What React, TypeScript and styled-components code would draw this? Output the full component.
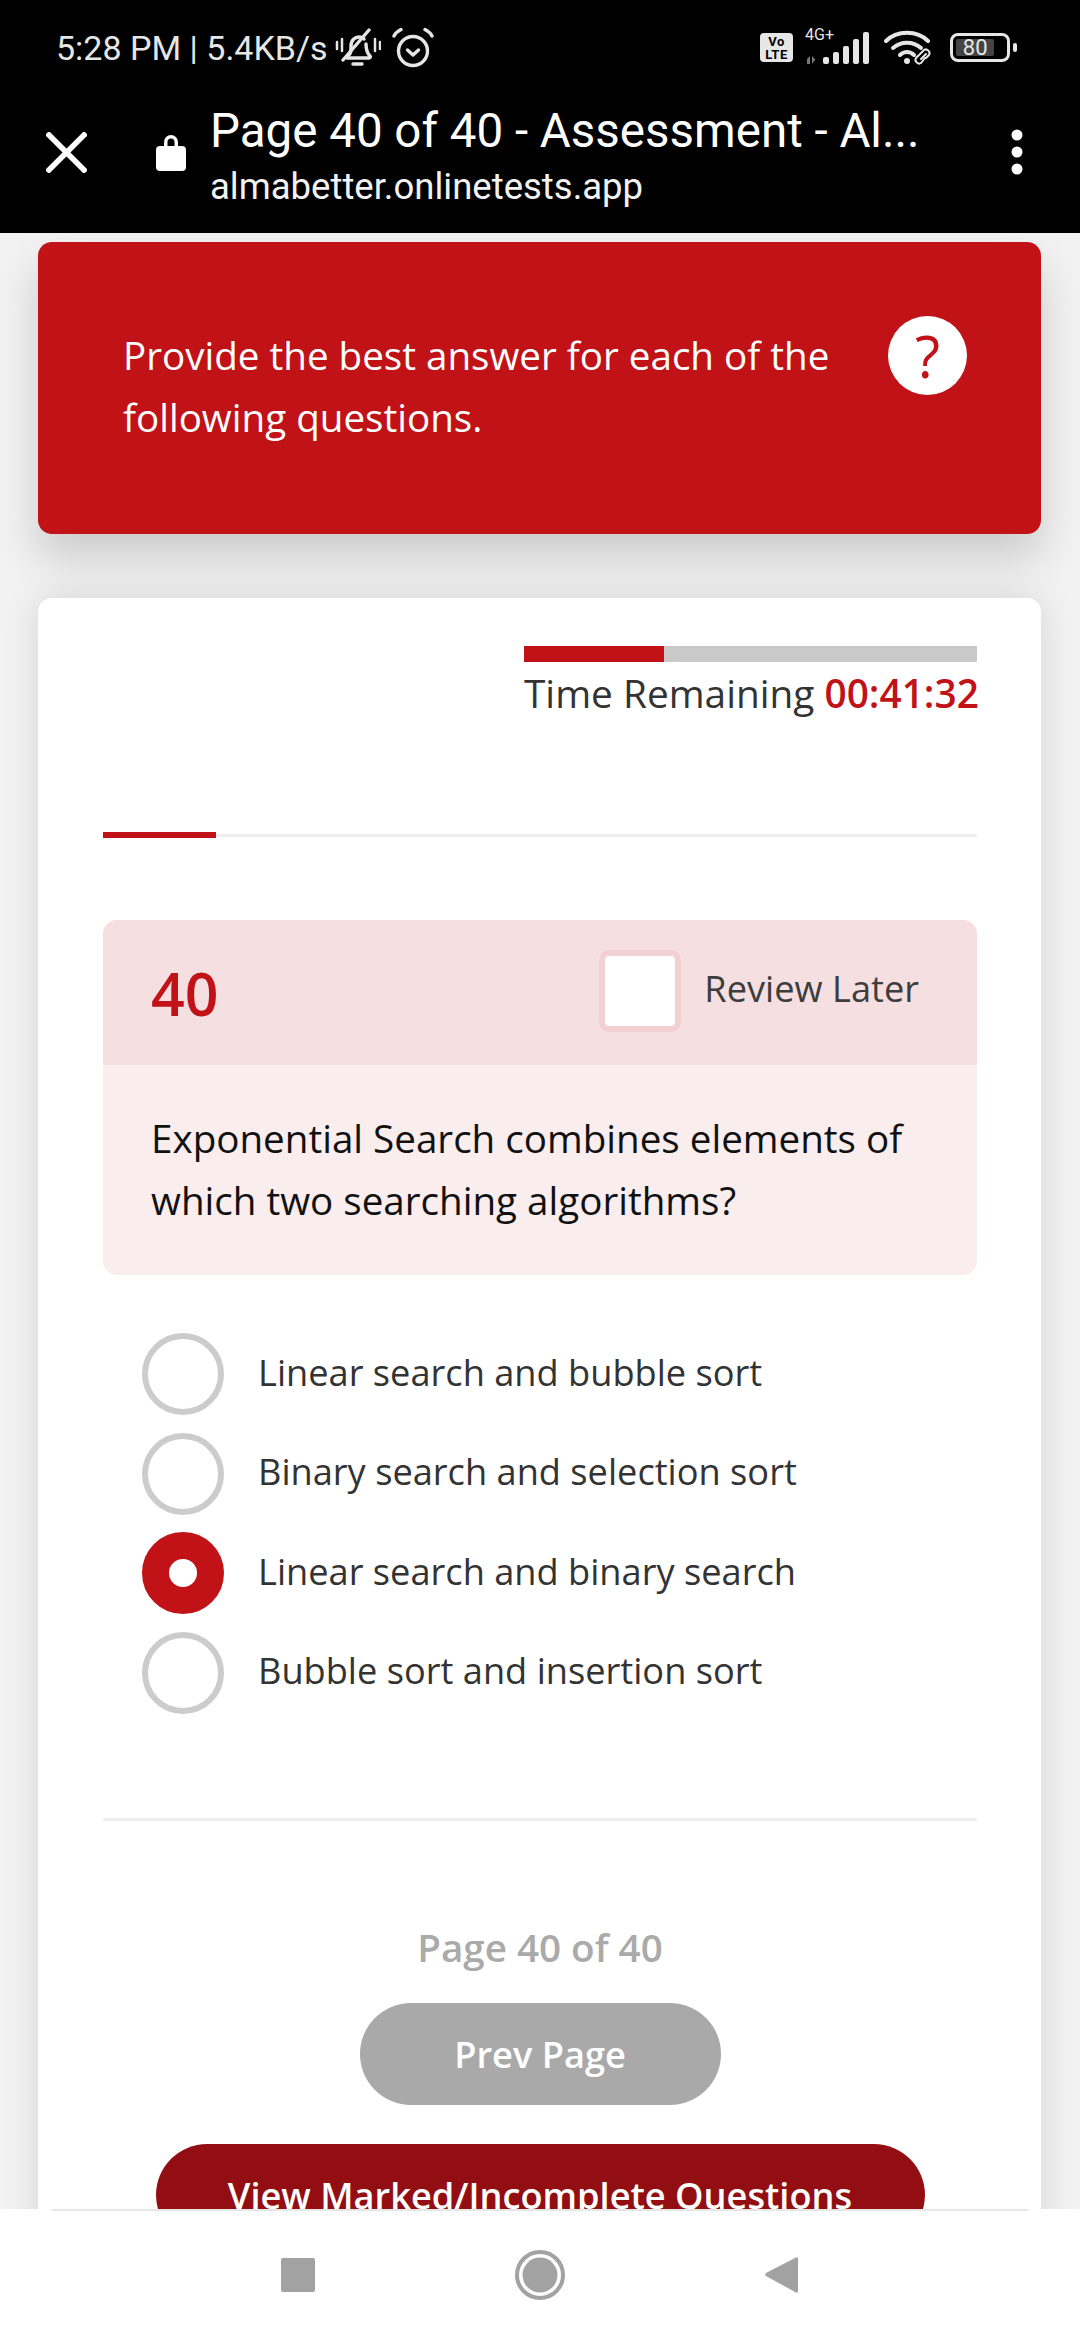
import { createGlobalStyle, styled } from 'styled-components';

const GlobalStyle = createGlobalStyle`
  html, body {
    margin: 0;
    padding: 0;
    background: #f2f2f2;
  }
  * {
    box-sizing: border-box;
  }
`;

const Screen = styled.div`
  width: 1080px;
  height: 2340px;
  display: flex;
  flex-direction: column;
  overflow: hidden;
  font-family: 'Open Sans', 'Liberation Sans', sans-serif;
`;

const Header = styled.header`
  height: 233px;
  flex-shrink: 0;
  background: #000;
  color: #fff;
  font-family: Roboto, 'Liberation Sans', sans-serif;
`;

const StatusBar = styled.div`
  height: 95px;
  padding: 0 63px 0 56px;
  display: flex;
  align-items: center;
  color: #e6e6e6;
`;

const StatusText = styled.span`
  font-size: 34px;
  white-space: nowrap;
  margin-right: 7px;
`;

const AlarmSlot = styled.div`
  margin-left: 11px;
  display: flex;
`;

const StatusIcons = styled.div`
  margin-left: auto;
  display: flex;
  align-items: center;
`;

const VolteBadge = styled.div`
  width: 33px;
  height: 29px;
  border-radius: 4px;
  background: #e6e6e6;
  color: #000;
  font-size: 13px;
  font-weight: 700;
  line-height: 13px;
  letter-spacing: 0.5px;
  text-align: center;
  padding-top: 2px;
  margin-right: 12px;
`;

const SignalWrap = styled.div`
  position: relative;
  width: 65px;
  height: 34px;
  margin-right: 14px;
`;

const NetworkLabel = styled.span`
  position: absolute;
  left: 0;
  top: -4px;
  font-size: 16px;
  line-height: 16px;
`;

const Toolbar = styled.div`
  height: 138px;
  padding: 0 0 24px 46px;
  display: flex;
  align-items: center;
`;

const LockSlot = styled.div`
  margin-left: 68px;
  display: flex;
`;

const TitleBlock = styled.div`
  width: 720px;
  margin-left: 23px;
  margin-top: 8px;
`;

const PageTitle = styled.div`
  font-size: 47.5px;
  line-height: 56px;
  white-space: nowrap;
`;

const PageUrl = styled.div`
  font-size: 36.5px;
  line-height: 44px;
  margin-top: 6px;
  color: #f2f2f2;
`;

const MenuSlot = styled.div`
  margin-left: auto;
  margin-right: 57px;
  display: flex;
`;

const Content = styled.main`
  flex: 1;
  min-height: 0;
  overflow: hidden;
  padding: 9px 39px 0 38px;
  background: #f2f2f2;
`;

const Banner = styled.section`
  height: 292px;
  border-radius: 14px;
  background: #c11217;
  color: #fff;
  padding: 82px 74px 0 85px;
  display: flex;
  justify-content: space-between;
  box-shadow: 0 24px 44px rgba(0, 0, 0, 0.16);
`;

const BannerText = styled.p`
  margin: 0;
  font-size: 38.6px;
  line-height: 62px;
  width: 750px;
`;

const HelpButton = styled.div`
  width: 79px;
  height: 79px;
  border-radius: 50%;
  background: #fff;
  color: #c11217;
  font-size: 58px;
  line-height: 79px;
  text-align: center;
  margin-top: -8px;
`;

const Card = styled.section`
  margin-top: 64px;
  padding: 48px 64px 0 65px;
  height: 1700px;
  border-radius: 14px;
  background: #fff;
  box-shadow: 0 0 36px rgba(0, 0, 0, 0.12);
`;

const TimerBlock = styled.div`
  width: 453px;
  margin-left: auto;
`;

const TimerTrack = styled.div`
  height: 16px;
  background: #c9c9c9;
`;

const TimerFill = styled.div<{ $percent: number }>`
  width: ${(p) => p.$percent}%;
  height: 100%;
  background: #c11217;
`;

const TimerText = styled.div`
  font-size: 38.8px;
  line-height: 52px;
  margin-top: 5px;
  color: #333;
  white-space: nowrap;
`;

const TimerValue = styled.span`
  color: #c11217;
  font-weight: 600;
`;

const ProgressLine = styled.div`
  height: 3px;
  margin-top: 115px;
  background: #eeeeee;
  position: relative;
`;

const ProgressFill = styled.div<{ $percent: number }>`
  position: absolute;
  left: 0;
  top: -2px;
  width: ${(p) => p.$percent}%;
  height: 6px;
  background: #c11217;
`;

const QuestionBox = styled.div`
  margin-top: 83px;
  border-radius: 14px;
  overflow: hidden;
`;

const QuestionHead = styled.div`
  height: 145px;
  background: #f6dfe1;
  padding: 0 58px 0 48px;
  display: flex;
  align-items: center;
  justify-content: space-between;
`;

const QuestionNumber = styled.span`
  font-size: 59px;
  font-weight: 600;
  color: #c11217;
`;

const ReviewWrap = styled.label`
  display: flex;
  align-items: center;
  gap: 23px;
  margin-top: -3px;
`;

const ReviewBox = styled.span`
  width: 82px;
  height: 82px;
  border: 6px solid #f2d0d3;
  border-radius: 10px;
  background: #fff;
`;

const ReviewText = styled.span`
  font-size: 36.2px;
  color: #3d3d3d;
  margin-top: -6px;
`;

const QuestionBody = styled.p`
  margin: 0;
  height: 210px;
  background: #f9edee;
  padding: 42px 48px 0;
  font-size: 38.6px;
  line-height: 62px;
  color: #111;
`;

const Options = styled.div`
  margin-top: 58px;
  padding-left: 39px;
  display: flex;
  flex-direction: column;
  gap: 17.500px;
`;

const Option = styled.div`
  height: 82px;
  display: flex;
  align-items: center;
  gap: 34px;
  font-size: 36.2px;
  color: #333;
`;

const Radio = styled.span<{ $checked?: boolean }>`
  width: 82px;
  height: 82px;
  flex-shrink: 0;
  border-radius: 50%;
  border: ${(p) => (p.$checked ? '27px solid #c11217' : '6px solid #cccccc')};
  background: #fff;
`;

const OptionLabel = styled.span`
  margin-top: -5px;
`;

const BottomLine = styled.div`
  height: 3px;
  margin-top: 104px;
  background: #eeeeee;
`;

const Pager = styled.div`
  margin-top: 100px;
  display: flex;
  flex-direction: column;
  align-items: center;
`;

const PagerText = styled.div`
  font-size: 38.6px;
  line-height: 52px;
  font-weight: 600;
  color: #aaaaaa;
`;

const PillButton = styled.div<{ $dark?: boolean }>`
  width: ${(p) => (p.$dark ? '769px' : '361px')};
  height: 102px;
  margin-top: ${(p) => (p.$dark ? '39px' : '30px')};
  border-radius: 51px;
  background: ${(p) => (p.$dark ? '#920e13' : '#a9a9a9')};
  color: #fff;
  font-size: 36.2px;
  font-weight: 600;
  line-height: 102px;
  text-align: center;
`;

const NavBar = styled.nav`
  height: 131px;
  flex-shrink: 0;
  background: #fff;
  position: relative;
  padding-top: 1px;
  display: grid;
  grid-template-columns: repeat(3, 242px);
  justify-content: center;
  align-items: center;
  justify-items: center;
  &::before {
    content: '';
    position: absolute;
    left: 52px;
    right: 52px;
    top: 0;
    height: 2px;
    background: #e6e6e6;
  }
`;

const NavSlot = styled.div`
  display: flex;
`;

const BellOff = () => (
  <svg width="46" height="40" viewBox="0 0 46 40" fill="none" stroke="#e6e6e6" strokeWidth="3.400" strokeLinecap="round">
    <path d="M14 27c2-2 2-4 2-9 0-6 4-9 8-9 2 0 4 .6 5 2" />
    <path d="M31 16c0 6 1 9 4 12 1 1 0 2-1 2H12" />
    <path d="M8 32 34 2" />
    <path d="M2 14v7M7 11v12M40 11v12M45 14v7" strokeWidth="2.500" />
    <path d="M18 36h9" strokeWidth="3.500" />
  </svg>
);

const AlarmClock = () => (
  <svg width="42" height="42" viewBox="0 0 42 42" fill="none" stroke="#e6e6e6" strokeWidth="3.400" strokeLinecap="round" strokeLinejoin="round">
    <circle cx="21" cy="24" r="14.500" />
    <path d="M15.500 23l5.500 5 5.500-5" />
    <path d="M2 9c1.500-3 4-5 7-6.500M40 9c-1.500-3-4-5-7-6.500" />
  </svg>
);

const SignalBars = () => (
  <svg width="65" height="34" viewBox="0 0 65 34" fill="#e6e6e6">
    <path d="M2 28l3-3v8H2zM7 33v-8l3 3v1z" fill="#777" />
    <rect x="18" y="26" width="6" height="7" rx="2" />
    <rect x="28" y="21" width="6" height="12" rx="2" />
    <rect x="38" y="15" width="6" height="18" rx="2" />
    <rect x="48" y="8" width="6" height="25" rx="2" />
    <rect x="58" y="1" width="6" height="32" rx="2" />
  </svg>
);

const WifiLink = () => (
  <svg width="50" height="36" viewBox="0 0 50 36" fill="none" stroke="#e6e6e6" strokeLinecap="round">
    <path d="M2 11C13 0 33 0 44 11" strokeWidth="4" />
    <path d="M9 18c8-7 20-7 28 0" strokeWidth="4" />
    <path d="M16 25c4-4 10-4 14 0" strokeWidth="4" />
    <circle cx="23" cy="31" r="3" fill="#e6e6e6" stroke="none" />
    <path d="M36 24l4-4c3-2 7 2 5 5l-3 3M41 28l-4 5c-3 2-7-2-5-5l3-3M37 29l5-5" strokeWidth="2" />
  </svg>
);

const BatteryWrap = styled.div`
  position: relative;
  width: 67px;
  height: 29px;
  margin-left: 16px;
`;

const BatteryBody = styled.div`
  width: 60px;
  height: 29px;
  border: 3px solid #e6e6e6;
  border-radius: 8px;
  padding: 3px;
  display: flex;
`;

const BatteryLevel = styled.div`
  width: 80%;
  height: 100%;
  border-radius: 2px;
  background: #444;
  color: #e6e6e6;
  font-size: 22px;
  line-height: 17px;
  text-align: center;
`;

const BatteryTip = styled.span`
  position: absolute;
  right: 0;
  top: 10px;
  width: 4px;
  height: 9px;
  border-radius: 2px;
  background: #e6e6e6;
`;

const CloseIcon = () => (
  <svg width="41" height="41" viewBox="0 0 41 41" stroke="#fff" strokeWidth="5.500" strokeLinecap="square">
    <path d="M3 3l35 35M38 3 3 38" />
  </svg>
);

const LockIcon = () => (
  <svg width="32" height="38" viewBox="0 0 32 38" fill="#fff">
    <path d="M9 14V9a7 7 0 0 1 14 0v5h-3.500V9a3.500 3.500 0 0 0-7 0v5z" />
    <rect x="1" y="13" width="30" height="25" rx="4" />
  </svg>
);

const MenuIcon = () => (
  <svg width="12" height="46" viewBox="0 0 12 46" fill="#fff">
    <circle cx="6" cy="6" r="5.500" />
    <circle cx="6" cy="23" r="5.500" />
    <circle cx="6" cy="40" r="5.500" />
  </svg>
);

const StopIcon = () => (
  <svg width="34" height="34" viewBox="0 0 34 34" fill="#a2a2a2">
    <rect width="34" height="34" rx="2" />
  </svg>
);

const HomeIcon = () => (
  <svg width="50" height="50" viewBox="0 0 50 50">
    <circle cx="25" cy="25" r="23" fill="none" stroke="#a2a2a2" strokeWidth="4" />
    <circle cx="25" cy="25" r="17.500" fill="#a2a2a2" />
  </svg>
);

const BackIcon = () => (
  <svg width="34" height="36" viewBox="0 0 34 36" fill="#a2a2a2">
    <path d="M33 2v32c0 2-2 2-3 1L1 19c-1-1-1-2 0-3L30 1c1-1 3-1 3 1z" />
  </svg>
);

const options = [
  { label: 'Linear search and bubble sort' },
  { label: 'Binary search and selection sort' },
  { label: 'Linear search and binary search', checked: true },
  { label: 'Bubble sort and insertion sort' },
];

const App = () => {
  return (
    <>
      <GlobalStyle />
      <Screen>
        <Header>
          <StatusBar>
            <StatusText>5:28 PM | 5.4KB/s</StatusText>
            <BellOff />
            <AlarmSlot>
              <AlarmClock />
            </AlarmSlot>
            <StatusIcons>
              <VolteBadge>
                Vo
                <br />
                LTE
              </VolteBadge>
              <SignalWrap>
                <NetworkLabel>4G+</NetworkLabel>
                <SignalBars />
              </SignalWrap>
              <WifiLink />
              <BatteryWrap>
                <BatteryBody>
                  <BatteryLevel>80</BatteryLevel>
                </BatteryBody>
                <BatteryTip />
              </BatteryWrap>
            </StatusIcons>
          </StatusBar>
          <Toolbar>
            <CloseIcon />
            <LockSlot>
              <LockIcon />
            </LockSlot>
            <TitleBlock>
              <PageTitle>Page 40 of 40 - Assessment - Al...</PageTitle>
              <PageUrl>almabetter.onlinetests.app</PageUrl>
            </TitleBlock>
            <MenuSlot>
              <MenuIcon />
            </MenuSlot>
          </Toolbar>
        </Header>
        <Content>
          <Banner>
            <BannerText>Provide the best answer for each of the following questions.</BannerText>
            <HelpButton>?</HelpButton>
          </Banner>
          <Card>
            <TimerBlock>
              <TimerTrack>
                <TimerFill $percent={(140 / 453) * 100} />
              </TimerTrack>
              <TimerText>
                Time Remaining <TimerValue>00:41:32</TimerValue>
              </TimerText>
            </TimerBlock>
            <ProgressLine>
              <ProgressFill $percent={(113 / 875) * 100} />
            </ProgressLine>
            <QuestionBox>
              <QuestionHead>
                <QuestionNumber>40</QuestionNumber>
                <ReviewWrap>
                  <ReviewBox />
                  <ReviewText>Review Later</ReviewText>
                </ReviewWrap>
              </QuestionHead>
              <QuestionBody>Exponential Search combines elements of which two searching algorithms?</QuestionBody>
            </QuestionBox>
            <Options>
              {options.map((option) => (
                <Option key={option.label}>
                  <Radio $checked={option.checked} />
                  <OptionLabel>{option.label}</OptionLabel>
                </Option>
              ))}
            </Options>
            <BottomLine />
            <Pager>
              <PagerText>Page 40 of 40</PagerText>
              <PillButton>Prev Page</PillButton>
              <PillButton $dark>View Marked/Incomplete Questions</PillButton>
            </Pager>
          </Card>
        </Content>
        <NavBar>
          <NavSlot>
            <StopIcon />
          </NavSlot>
          <NavSlot>
            <HomeIcon />
          </NavSlot>
          <NavSlot>
            <BackIcon />
          </NavSlot>
        </NavBar>
      </Screen>
    </>
  );
};

export default App;
